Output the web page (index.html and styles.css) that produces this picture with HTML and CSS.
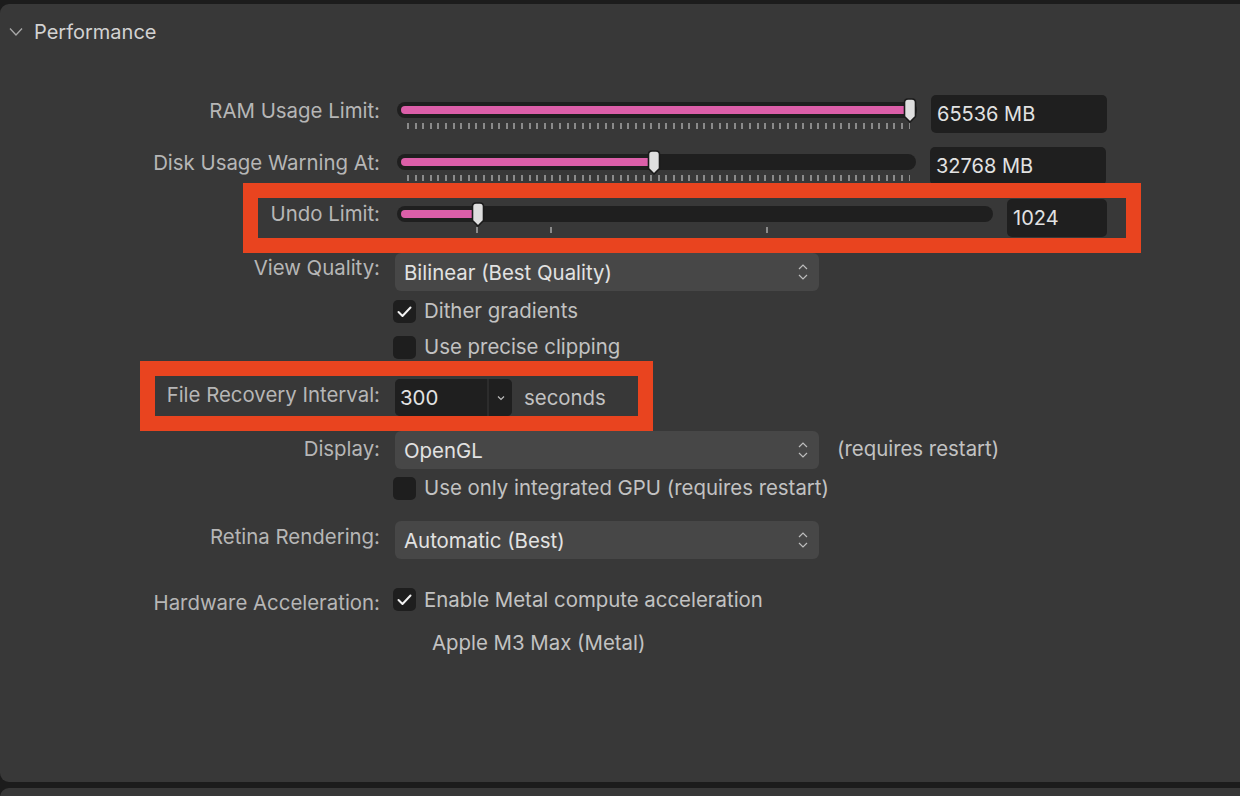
FILE: index.html
```html
<!DOCTYPE html>
<html>
<head>
<meta charset="utf-8">
<link rel="stylesheet" href="styles.css">
</head>
<body>
<div class="band"></div>
<div class="panel">
  <div class="header">
    <svg class="disclosure" width="14" height="10" viewBox="0 0 14 10"><path d="M1 1.5 L7 8 L13 1.5"/></svg>
    <span class="title">Performance</span>
  </div>
  <div class="rows">
    <div class="row r-ram">
      <div class="label l-slider">RAM Usage Limit:</div>
      <div class="slider s-wide">
        <div class="track"><div class="fill" style="width:508px"></div></div>
        <svg class="thumb" style="left:505.5px" width="14" height="25" viewBox="0 0 14 25"><path d="M1.5 4.5 Q1.5 1 5 1 H9 Q12.5 1 12.5 4.5 V18.5 L7 24 L1.5 18.5 Z"/></svg>
        <div class="ticks"></div>
      </div>
      <div class="value v-wide">65536 MB</div>
    </div>
    <div class="row r-disk">
      <div class="label l-slider">Disk Usage Warning At:</div>
      <div class="slider s-wide s-disk">
        <div class="track"><div class="fill" style="width:252px"></div></div>
        <svg class="thumb" style="left:249.5px" width="14" height="25" viewBox="0 0 14 25"><path d="M1.5 4.5 Q1.5 1 5 1 H9 Q12.5 1 12.5 4.5 V18.5 L7 24 L1.5 18.5 Z"/></svg>
        <div class="ticks"></div>
      </div>
      <div class="value v-wide">32768 MB</div>
    </div>
    <div class="row r-undo">
      <div class="hl hl-undo"></div>
      <div class="label l-undo">Undo Limit:</div>
      <div class="slider s-undo">
        <div class="track"><div class="fill" style="width:76px"></div></div>
        <svg class="thumb" style="left:74px" width="14" height="25" viewBox="0 0 14 25"><path d="M1.5 4.5 Q1.5 1 5 1 H9 Q12.5 1 12.5 4.5 V18.5 L7 24 L1.5 18.5 Z"/></svg>
        <div class="major-ticks">
          <span class="mt" style="margin-left:79px"></span>
          <span class="mt" style="margin-left:72px"></span>
          <span class="mt" style="margin-left:214px"></span>
        </div>
      </div>
      <div class="value v-narrow">1024</div>
    </div>
    <div class="row r-view">
      <div class="label l-view">View Quality:</div>
      <div class="popup">
        <span>Bilinear (Best Quality)</span>
        <svg class="updown" width="12" height="22" viewBox="0 0 12 22"><path d="M2 8 L6 4 L10 8 M2 14 L6 18 L10 14"/></svg>
      </div>
    </div>
    <div class="row r-dither">
      <div class="label"></div>
      <div class="check on"><svg width="23" height="23" viewBox="0 0 23 23"><path d="M5.5 12 L9.5 16 L17.5 7.5"/></svg></div>
      <span class="ctext">Dither gradients</span>
    </div>
    <div class="row r-precise">
      <div class="label"></div>
      <div class="check"></div>
      <span class="ctext">Use precise clipping</span>
    </div>
    <div class="row r-file">
      <div class="hl hl-file"></div>
      <div class="label l-file">File Recovery Interval:</div>
      <div class="combo">
        <div class="combo-field">300</div>
        <div class="combo-btn"><svg width="10" height="8" viewBox="0 0 10 8"><path d="M2 2.5 L5 5.5 L8 2.5"/></svg></div>
      </div>
      <span class="ctext unit">seconds</span>
    </div>
    <div class="row r-display">
      <div class="label l-display">Display:</div>
      <div class="popup">
        <span>OpenGL</span>
        <svg class="updown" width="12" height="22" viewBox="0 0 12 22"><path d="M2 8 L6 4 L10 8 M2 14 L6 18 L10 14"/></svg>
      </div>
      <span class="ctext note">(requires restart)</span>
    </div>
    <div class="row r-gpu">
      <div class="label"></div>
      <div class="check"></div>
      <span class="ctext">Use only integrated GPU (requires restart)</span>
    </div>
    <div class="row r-retina">
      <div class="label l-retina">Retina Rendering:</div>
      <div class="popup">
        <span>Automatic (Best)</span>
        <svg class="updown" width="12" height="22" viewBox="0 0 12 22"><path d="M2 8 L6 4 L10 8 M2 14 L6 18 L10 14"/></svg>
      </div>
    </div>
    <div class="row r-hw">
      <div class="label l-hw">Hardware Acceleration:</div>
      <div class="check on"><svg width="23" height="23" viewBox="0 0 23 23"><path d="M5.5 12 L9.5 16 L17.5 7.5"/></svg></div>
      <span class="ctext">Enable Metal compute acceleration</span>
    </div>
    <div class="row r-apple">
      <div class="label"></div>
      <span class="ctext gpu-name">Apple M3 Max (Metal)</span>
    </div>
  </div>
</div>
<div class="gap"></div>
<div class="panel2"></div>
</body>
</html>
```

FILE: styles.css
```css
html, body {
  margin: 0;
  padding: 0;
  background: #1c1c1c;
  width: 1240px;
  height: 796px;
  overflow: hidden;
  font-family: "Inter", "Noto Sans", sans-serif;
  font-size: 20.4px;
  color: #b6b6b6;
}

.band {
  height: 4px;
}

.panel {
  height: 778px;
  background: #383838;
  border-radius: 9px 0 0 9px;
}

.gap {
  height: 6px;
}

.panel2 {
  height: 20px;
  background: #383838;
  border-radius: 9px 0 0 0;
}

.header {
  height: 56px;
  display: flex;
  align-items: center;
}

.disclosure {
  margin-left: 9px;
  fill: none;
  stroke: #a8a8a8;
  stroke-width: 1.3;
}

.title {
  margin-left: 11px;
  color: #d2d2d2;
  font-size: 20px;
}

.rows {
  padding-top: 35px;
  display: flex;
  flex-direction: column;
}

.row {
  position: relative;
  display: flex;
  align-items: flex-start;
  flex: none;
}

.label {
  width: 380px;
  flex: none;
  text-align: right;
  line-height: 24px;
  white-space: nowrap;
}

.l-slider { margin-top: 4px; }
.l-undo { margin-top: 3px; }
.l-view { margin-top: 3px; }
.l-file { margin-top: 4px; }
.l-display { margin-top: 6px; }
.l-retina { margin-top: 4px; }
.l-hw { margin-top: 3px; }

/* row positions */
.r-ram { height: 38px; }
.r-disk { margin-top: 14px; height: 38px; }
.r-undo { margin-top: 14px; height: 38px; }
.r-view { margin-top: 16px; height: 38px; }
.r-dither { margin-top: 8px; height: 24px; align-items: center; }
.r-precise { margin-top: 12px; height: 24px; align-items: center; }
.r-file { margin-top: 20px; height: 37px; }
.r-display { margin-top: 15px; height: 38px; }
.r-gpu { margin-top: 7px; height: 24px; align-items: center; }
.r-retina { margin-top: 21px; height: 38px; }
.r-hw { margin-top: 29px; height: 24px; }
.r-apple { margin-top: 19px; height: 24px; align-items: center; }

/* sliders */
.slider {
  position: relative;
  margin-left: 17px;
  flex: none;
}

.s-wide { width: 520px; }
.s-disk { width: 519px; }
.s-undo { width: 596px; }

.track {
  margin-top: 7px;
  height: 16px;
  box-sizing: border-box;
  padding: 4px;
  background: #1f1f1f;
  border-radius: 8px;
}

.fill {
  height: 8px;
  background: #dc5fa9;
  border-radius: 4px 0 0 4px;
}

.thumb {
  position: absolute;
  top: 3px;
}

.thumb path {
  fill: #dedede;
  stroke: #1b1b1b;
  stroke-width: 1.6;
}

.ticks {
  margin: 5px 0 0 9.7px;
  width: 503.6px;
  height: 6px;
  background: repeating-linear-gradient(to right, #8a8a8a 0 2px, transparent 2px 7.6px);
}

.major-ticks {
  display: flex;
  margin-top: 5px;
  height: 6px;
}

.mt {
  width: 2px;
  height: 6px;
  background: #8a8a8a;
  flex: none;
}

.value {
  flex: none;
  height: 38px;
  margin-left: 14px;
  box-sizing: border-box;
  background: #1f1f1f;
  border-radius: 5px;
  color: #e2e2e2;
  padding-left: 6px;
  line-height: 38px;
  font-size: 20px;
}

.v-wide { width: 176px; }
.v-narrow { width: 100px; }

/* highlight annotations */
.hl {
  position: absolute;
  box-sizing: border-box;
  border: 15px solid #e9441f;
  pointer-events: none;
}

.hl-undo {
  left: 243px;
  top: -16px;
  width: 898px;
  height: 70px;
}

.hl-file {
  left: 140px;
  top: -18px;
  width: 513px;
  height: 70px;
}

/* popups */
.popup {
  flex: none;
  margin-left: 15px;
  width: 424px;
  height: 38px;
  box-sizing: border-box;
  background: #474747;
  border-radius: 6px;
  display: flex;
  align-items: center;
  justify-content: space-between;
  padding: 0 10px 0 9px;
  color: #e2e2e2;
}

.updown {
  fill: none;
  stroke: #bdbdbd;
  stroke-width: 1.2;
}

/* checkboxes */
.check {
  flex: none;
  width: 23px;
  height: 23px;
  margin-left: 13px;
  background: #1e1e1e;
  border-radius: 5px;
}

.check svg path {
  fill: none;
  stroke: #f2f2f2;
  stroke-width: 2;
  stroke-linecap: round;
  stroke-linejoin: round;
}

.ctext {
  margin-left: 8px;
  line-height: 24px;
  color: #c2c2c2;
  white-space: nowrap;
}

/* combo */
.combo {
  flex: none;
  margin-left: 15px;
  display: flex;
  height: 37px;
  background: #2c2c2c;
  border-radius: 5px;
}

.combo-field {
  width: 92px;
  background: #1f1f1f;
  border-radius: 5px 0 0 5px;
  color: #e2e2e2;
  line-height: 37px;
  padding-left: 5px;
  box-sizing: border-box;
}

.combo-btn {
  width: 23px;
  margin-left: 2px;
  background: #1f1f1f;
  border-radius: 0 5px 5px 0;
  display: flex;
  align-items: center;
  justify-content: center;
}

.combo-btn path {
  fill: none;
  stroke: #bdbdbd;
  stroke-width: 1.2;
}

.unit {
  margin-left: 12px;
  line-height: 37px;
}

.note {
  margin-left: 18px;
  line-height: 36px;
}

.gpu-name {
  margin-left: 52px;
}
```
